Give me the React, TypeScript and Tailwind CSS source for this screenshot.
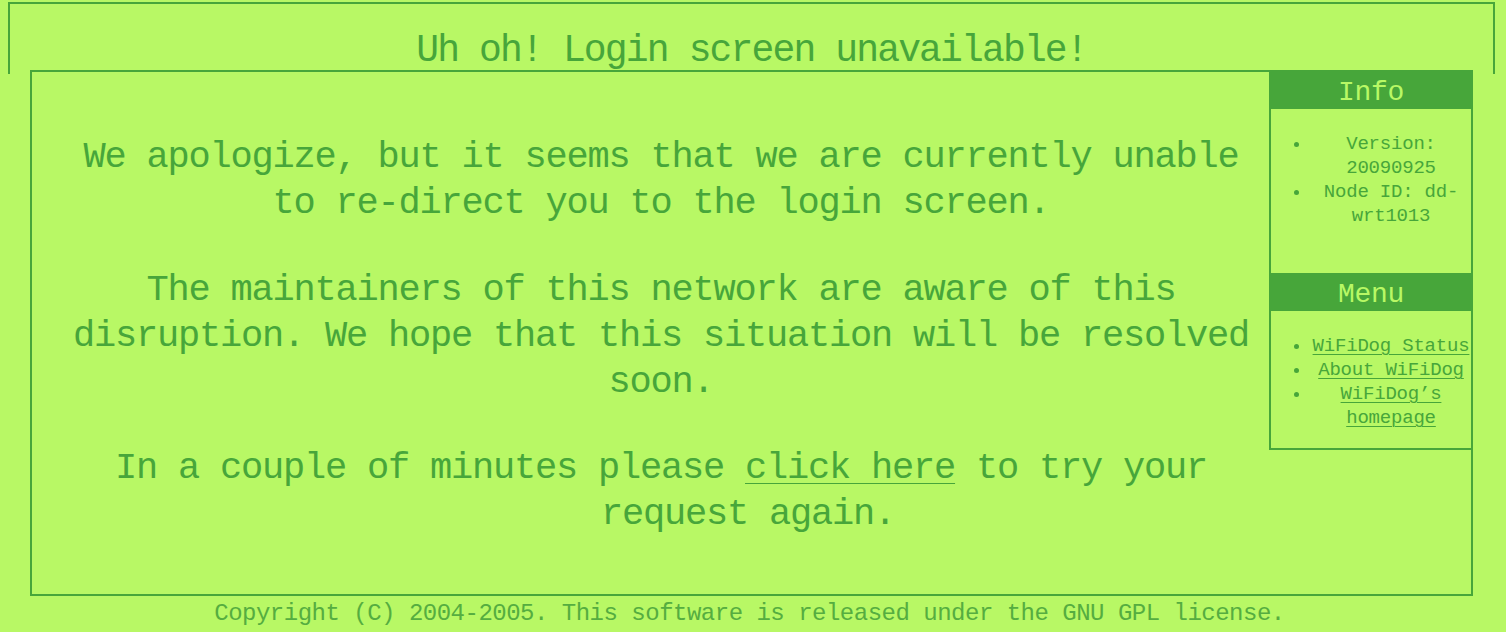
import React from 'react';

const infoItems = ['Version: 20090925', 'Node ID: dd-wrt1013'];
const menuItems = ['WiFiDog Status', 'About WiFiDog', 'WiFiDog’s homepage'];

export default function App() {
  return (
    <div className="min-h-screen w-full bg-[#b8f865] pt-[2px] font-['Liberation_Mono',monospace] text-[#47a63a]">
      {/* header */}
      <div className="ml-[8px] mr-[11px] h-[72px] border-2 border-b-0 border-[#47a63a] pt-[24px] text-center text-[38px] leading-[46px] tracking-[-1.85px]">
        Uh oh! Login screen unavailable!
      </div>

      {/* main box, sidebar floats at its top right */}
      <div className="-mt-[4px] ml-[30px] mr-[33px] h-[526px] border-2 border-[#47a63a] pl-[22px] pr-[29px] text-center text-[37px] leading-[46px] tracking-[-1.2px]">
        <div className="float-right -mr-[31px] -mt-[2px] ml-[1px] w-[204px] tracking-normal">
          <div className="h-[39px] bg-[#47a63a] pt-[7px] text-center text-[28px] leading-[32px] tracking-[-0.3px] text-[#b8f865]">
            Info
          </div>
          <div className="h-[164px] border-x-2 border-[#47a63a] pt-[23px]">
            <ul className="list-disc pl-[40px] text-center text-[19px] leading-[24px] tracking-[-0.2px]">
              {infoItems.map((item) => (
                <li key={item}>{item}</li>
              ))}
            </ul>
          </div>
          <div className="h-[38px] bg-[#47a63a] pt-[6px] text-center text-[28px] leading-[32px] tracking-[-0.3px] text-[#b8f865]">
            Menu
          </div>
          <div className="h-[139px] border-2 border-t-0 border-[#47a63a] pt-[23px]">
            <ul className="list-disc pl-[40px] text-center text-[19px] leading-[24px] tracking-[-0.2px]">
              {menuItems.map((item) => (
                <li key={item}>
                  <a href="#" className="underline decoration-1 underline-offset-[3px]">{item}</a>
                </li>
              ))}
            </ul>
          </div>
        </div>

        <p className="mt-[62px]">
          We apologize, but it seems that we are currently unable to re-direct you to the login screen.
        </p>
        <p className="mt-[41px]">
          The maintainers of this network are aware of this disruption. We hope that this situation will be resolved soon.
        </p>
        <p className="mt-[40px]">
          In a couple of minutes please{' '}
          <a href="#" className="underline decoration-1 underline-offset-[5px]">click here</a> to try your request again.
        </p>
      </div>

      {/* footer */}
      <div className="mt-[4px] pb-[6px] pr-[7px] text-center text-[24px] leading-[28px] tracking-[-0.5px] text-[#55ad40]">
        Copyright (C) 2004-2005. This software is released under the GNU GPL license.
      </div>
    </div>
  );
}
